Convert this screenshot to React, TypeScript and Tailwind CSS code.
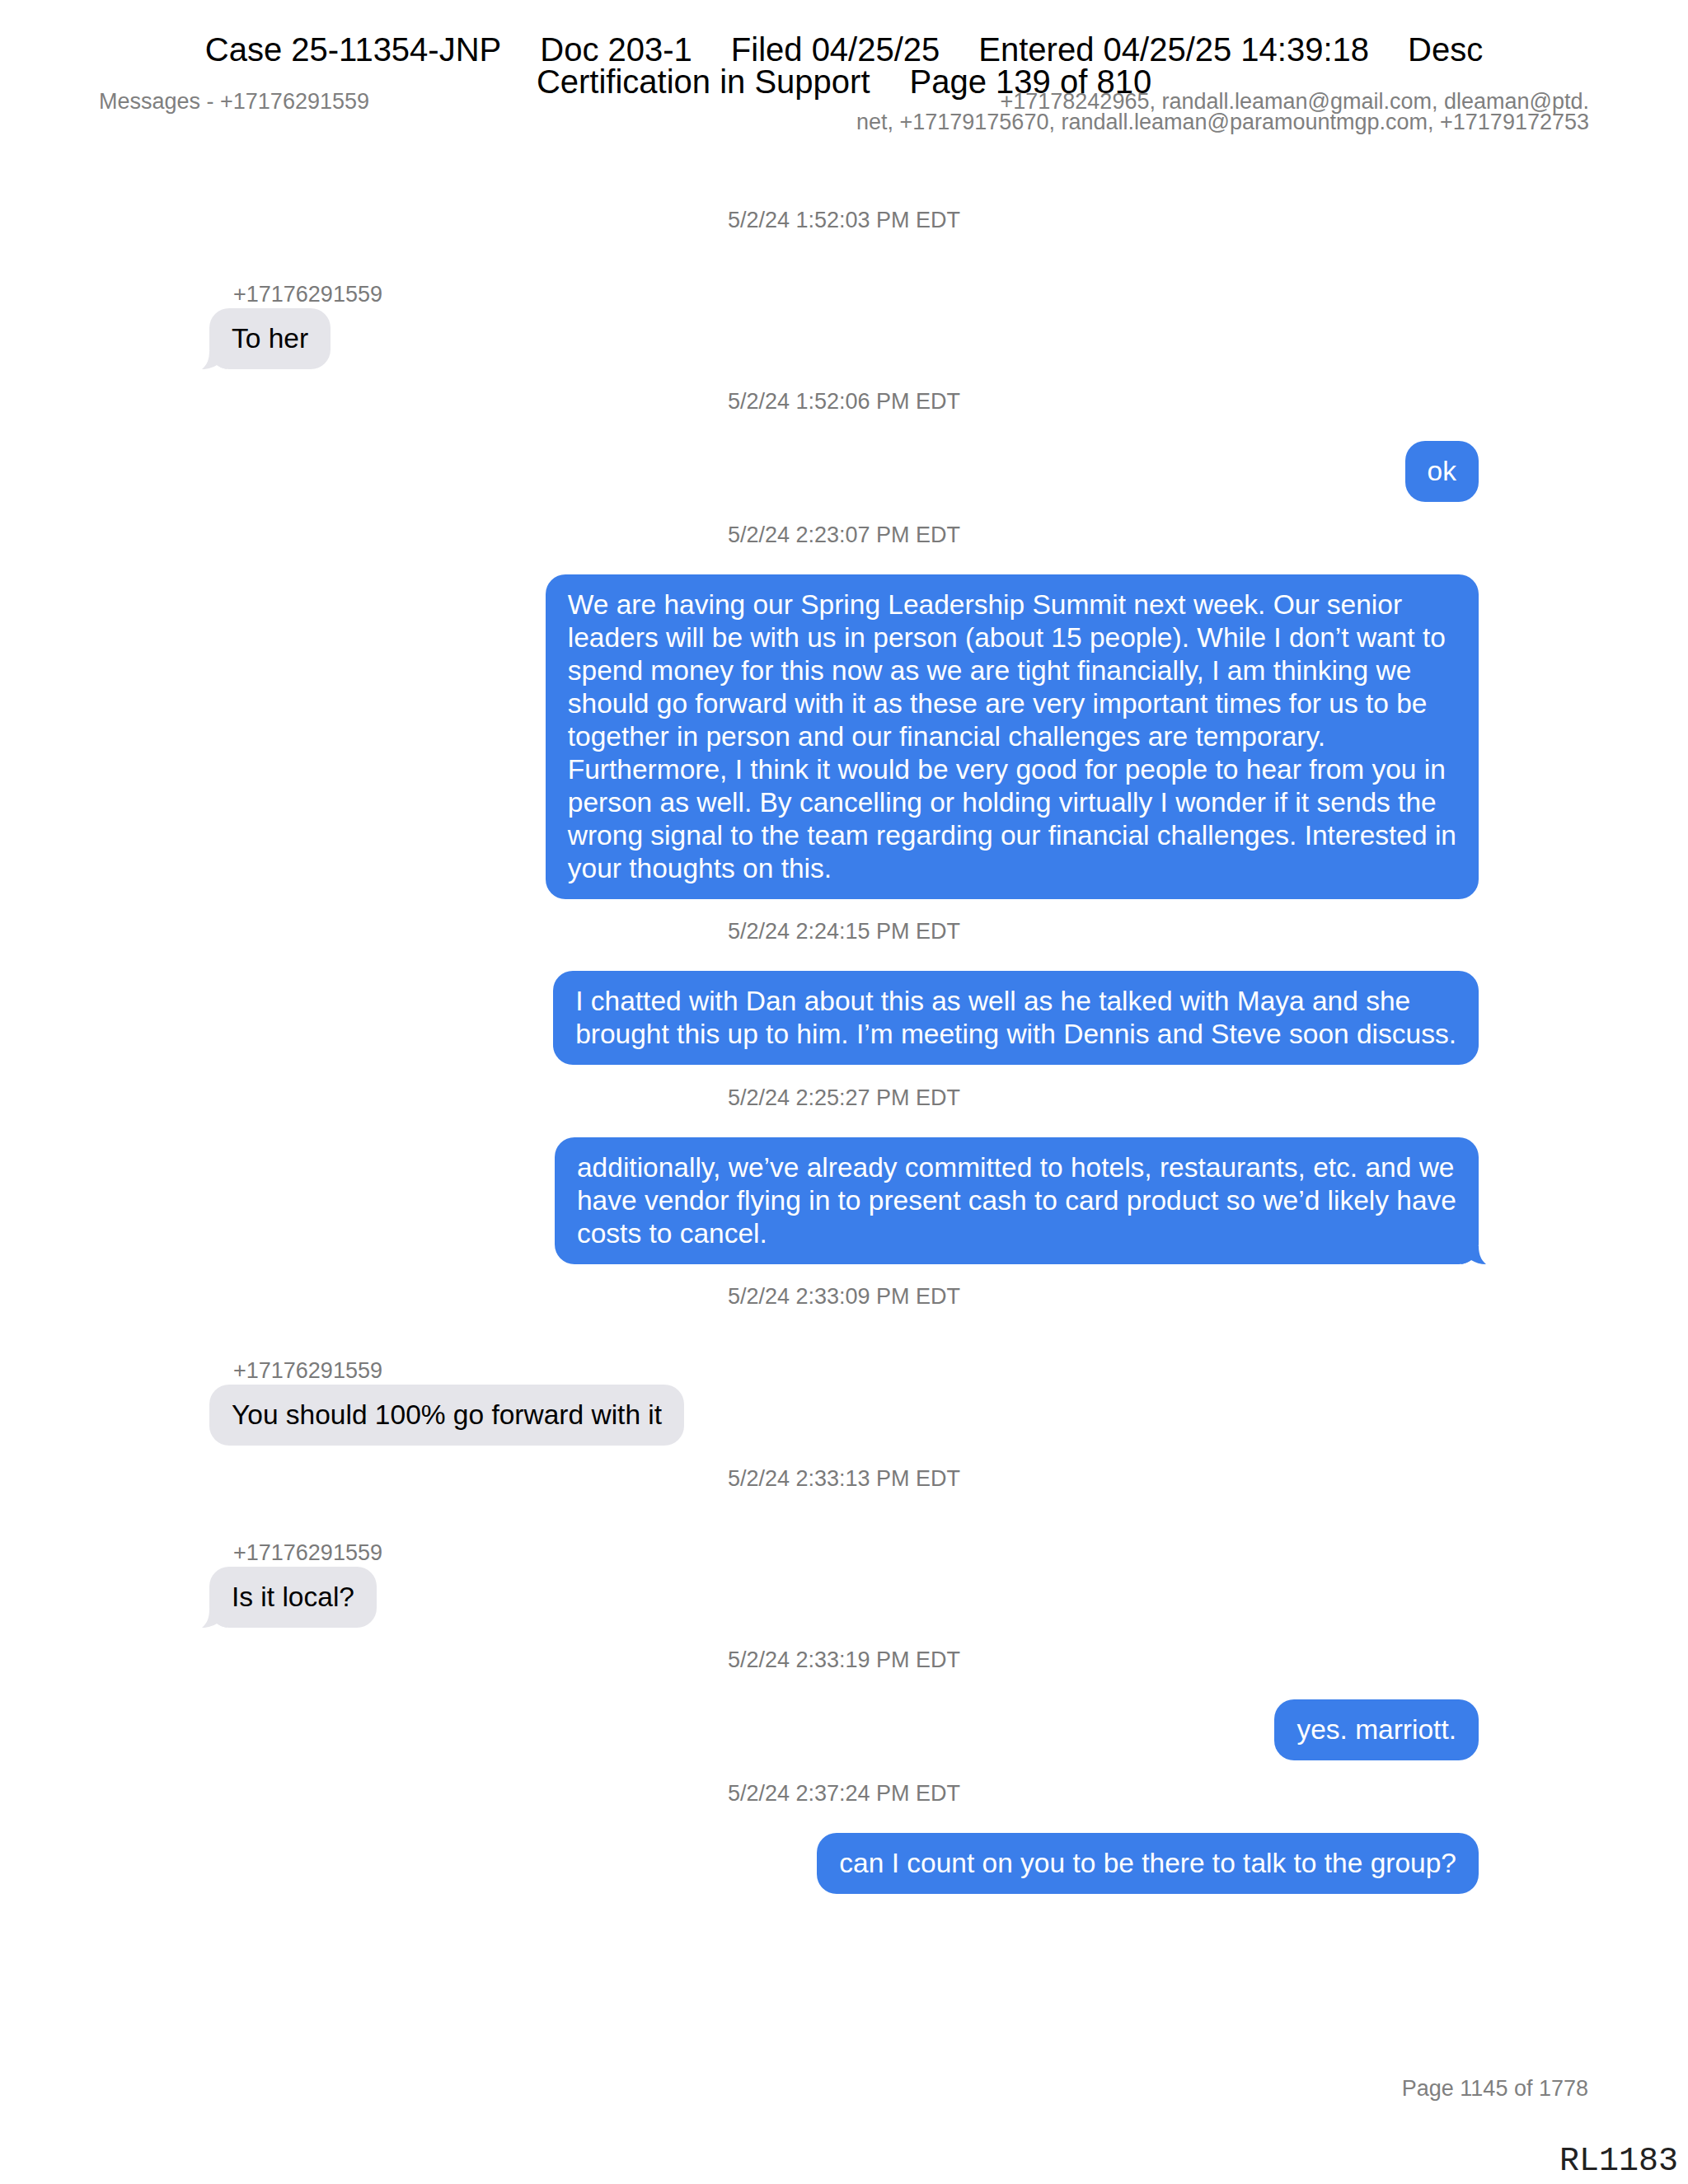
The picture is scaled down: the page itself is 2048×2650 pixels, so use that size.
import React from "react";

type Msg =
  | { kind: "sent"; time: string; lines: string[]; tail?: boolean }
  | { kind: "recv"; time: string; from: string; lines: string[]; tail?: boolean };

const thread: Msg[] = [
  { kind: "recv", time: "5/2/24 1:52:03 PM EDT", from: "+17176291559", lines: ["To her"], tail: true },
  { kind: "sent", time: "5/2/24 1:52:06 PM EDT", lines: ["ok"] },
  {
    kind: "sent",
    time: "5/2/24 2:23:07 PM EDT",
    lines: [
      "We are having our Spring Leadership Summit next week. Our senior",
      "leaders will be with us in person (about 15 people). While I don’t want to",
      "spend money for this now as we are tight financially, I am thinking we",
      "should go forward with it as these are very important times for us to be",
      "together in person and our financial challenges are temporary.",
      "Furthermore, I think it would be very good for people to hear from you in",
      "person as well. By cancelling or holding virtually I wonder if it sends the",
      "wrong signal to the team regarding our financial challenges. Interested in",
      "your thoughts on this.",
    ],
  },
  {
    kind: "sent",
    time: "5/2/24 2:24:15 PM EDT",
    lines: [
      "I chatted with Dan about this as well as he talked with Maya and she",
      "brought this up to him. I’m meeting with Dennis and Steve soon discuss.",
    ],
  },
  {
    kind: "sent",
    time: "5/2/24 2:25:27 PM EDT",
    lines: [
      "additionally, we’ve already committed to hotels, restaurants, etc. and we",
      "have vendor flying in to present cash to card product so we’d likely have",
      "costs to cancel.",
    ],
    tail: true,
  },
  { kind: "recv", time: "5/2/24 2:33:09 PM EDT", from: "+17176291559", lines: ["You should 100% go forward with it"] },
  { kind: "recv", time: "5/2/24 2:33:13 PM EDT", from: "+17176291559", lines: ["Is it local?"], tail: true },
  { kind: "sent", time: "5/2/24 2:33:19 PM EDT", lines: ["yes. marriott."] },
  { kind: "sent", time: "5/2/24 2:37:24 PM EDT", lines: ["can I count on you to be there to talk to the group?"] },
];

function Tail({ color, side }: { color: string; side: "left" | "right" }) {
  return (
    <svg
      viewBox="0 0 30 22"
      className={
        side === "left"
          ? "absolute left-[-9px] bottom-0 w-[30px] h-[22px]"
          : "absolute right-[-9px] bottom-0 w-[30px] h-[22px] -scale-x-100"
      }
    >
      <path d="M9 0 C9 10 6 17 0 22 C7 22 13 20 18 17 C21 19 25 21 30 22 L30 0 Z" fill={color} />
    </svg>
  );
}

function Bubble({ msg }: { msg: Msg }) {
  const sent = msg.kind === "sent";
  return (
    <div
      className={`relative whitespace-nowrap rounded-[24px] px-[27px] py-[17px] text-[33.5px] leading-[40px] ${
        sent ? "bg-[#3b7eea] text-white" : "bg-[#e5e5ea] text-black"
      }`}
    >
      {msg.lines.map((l, i) => (
        <div key={i}>{l}</div>
      ))}
      {msg.tail && <Tail color={sent ? "#3b7eea" : "#e5e5ea"} side={sent ? "right" : "left"} />}
    </div>
  );
}

export default function App() {
  return (
    <div className="relative flex flex-col w-[2048px] h-[2650px] bg-white font-['Liberation_Sans',Arial,sans-serif] overflow-hidden">
      {/* Header */}
      <div className="flex justify-between items-start px-[120px] pt-[111px] text-[27px] leading-[25px] text-[#7f7f7f]">
        <div>Messages - +17176291559</div>
        <div className="text-right">
          <div>+17178242965, randall.leaman@gmail.com, dleaman@ptd.</div>
          <div>net, +17179175670, randall.leaman@paramountmgp.com, +17179172753</div>
        </div>
      </div>

      {/* Thread */}
      <div className="w-[1540px] mx-auto pt-[66px] flex flex-col">
        {thread.map((m, i) => (
          <div key={i} className="mt-[24.5px] flex flex-col">
            <div className="text-center text-[27px] leading-[30px] text-[#7a7a7a]">{m.time}</div>
            {m.kind === "recv" ? (
              <div className="flex flex-col items-start">
                <div className="mt-[60px] pl-[29px] text-[27px] leading-[30px] text-[#7a7a7a]">{m.from}</div>
                <div className="mt-[2px]">
                  <Bubble msg={m} />
                </div>
              </div>
            ) : (
              <div className="mt-[33px] flex justify-end">
                <Bubble msg={m} />
              </div>
            )}
          </div>
        ))}
      </div>

      {/* Footer */}
      <div className="mt-auto pb-[7px] flex flex-col items-end">
        <div className="pr-[121px] text-[27px] leading-[30px] text-[#7f7f7f]">Page 1145 of 1778</div>
        <div className="mt-[54px] pr-[12px] font-['Liberation_Mono',monospace] text-[40px] leading-[40px] text-[#222]">
          RL1183
        </div>
      </div>

      {/* Court filing stamp over the page */}
      <div className="absolute inset-x-0 top-0 pt-[41px] text-[40px] leading-[39px] text-black">
        <div className="flex justify-center gap-[47px]">
          <span>Case 25-11354-JNP</span>
          <span>Doc 203-1</span>
          <span>Filed 04/25/25</span>
          <span>Entered 04/25/25 14:39:18</span>
          <span>Desc</span>
        </div>
        <div className="flex justify-center gap-[48px]">
          <span>Certification in Support</span>
          <span>Page 139 of 810</span>
        </div>
      </div>
    </div>
  );
}
